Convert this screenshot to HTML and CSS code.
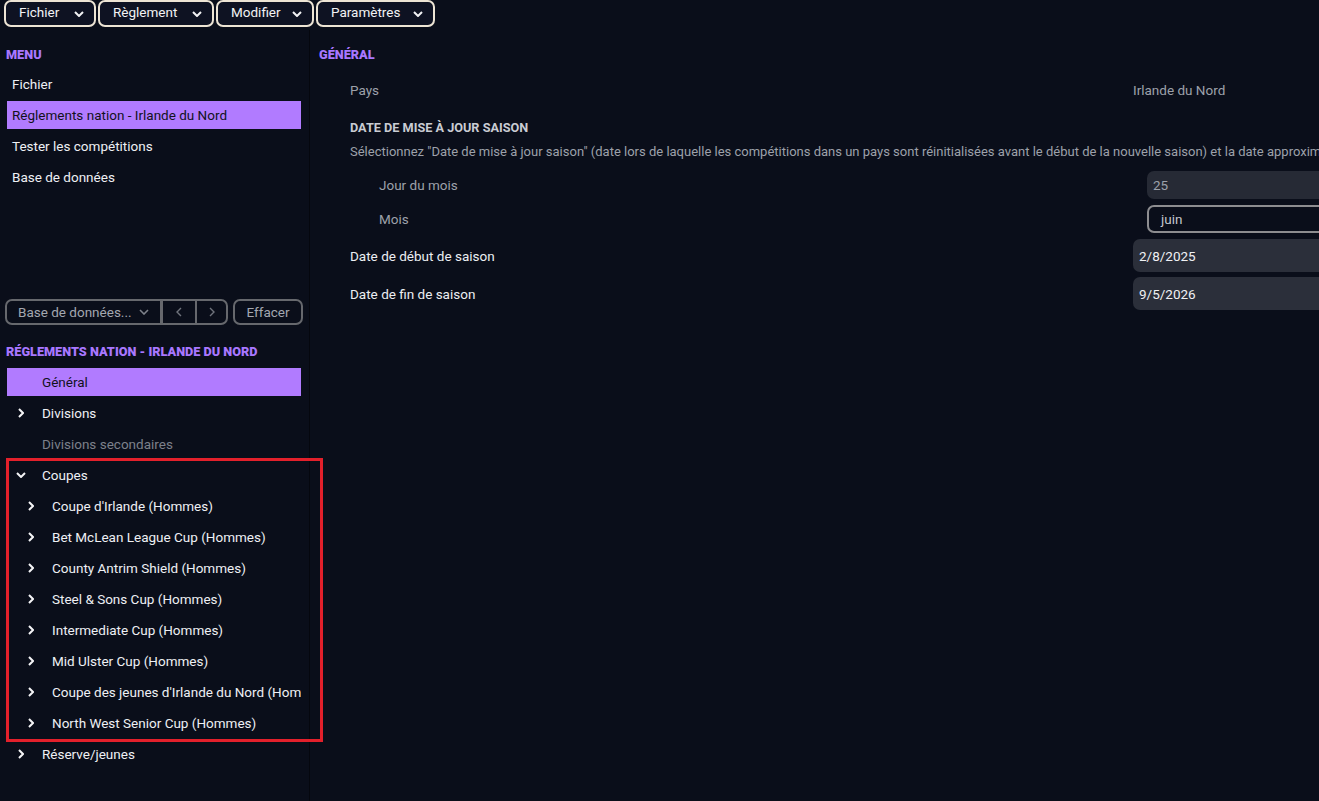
FILE: index.html
```html
<!DOCTYPE html>
<html lang="fr">
<head>
<meta charset="utf-8">
<title>Réglements nation</title>
<link rel="stylesheet" href="styles.css">
</head>
<body>
<div class="app">
  <header class="topbar">
    <button class="top-btn">Fichier <svg class="chev-d" viewBox="0 0 10 6"><path d="M1 1l4 4 4-4"/></svg></button>
    <button class="top-btn">Règlement <svg class="chev-d" viewBox="0 0 10 6"><path d="M1 1l4 4 4-4"/></svg></button>
    <button class="top-btn">Modifier <svg class="chev-d" viewBox="0 0 10 6"><path d="M1 1l4 4 4-4"/></svg></button>
    <button class="top-btn">Paramètres <svg class="chev-d" viewBox="0 0 10 6"><path d="M1 1l4 4 4-4"/></svg></button>
  </header>
  <div class="layout">
    <aside class="sidebar">
      <div class="sec-title">MENU</div>
      <ul class="menu">
        <li class="menu-item">Fichier</li>
        <li class="menu-item active">Réglements nation - Irlande du Nord</li>
        <li class="menu-item">Tester les compétitions</li>
        <li class="menu-item">Base de données</li>
      </ul>
      <div class="toolbar">
        <div class="seg">
          <div class="seg-drop">Base de données... <svg class="chev-d grey" viewBox="0 0 10 6"><path d="M1 1l4 4 4-4"/></svg></div>
          <div class="seg-btn seg-prev"><svg class="chev-s" viewBox="0 0 6 10"><path d="M5 1L1 5l4 4"/></svg></div>
          <div class="seg-btn seg-next"><svg class="chev-s" viewBox="0 0 6 10"><path d="M1 1l4 4-4 4"/></svg></div>
        </div>
        <div class="clear-btn">Effacer</div>
      </div>
      <div class="sec-title sec-second">RÉGLEMENTS NATION - IRLANDE DU NORD</div>
      <ul class="tree">
        <li class="node lvl1 active"><span class="arr"></span>Général</li>
        <li class="node lvl1"><span class="arr"><svg viewBox="0 0 6 10"><path d="M1 1l4 4-4 4"/></svg></span>Divisions</li>
        <li class="node lvl1 muted"><span class="arr"></span>Divisions secondaires</li>
        <li class="node lvl1"><span class="arr"><svg class="down" viewBox="0 0 10 6"><path d="M1 1l4 4 4-4"/></svg></span>Coupes</li>
        <li class="node lvl2"><span class="arr"><svg viewBox="0 0 6 10"><path d="M1 1l4 4-4 4"/></svg></span>Coupe d'Irlande (Hommes)</li>
        <li class="node lvl2"><span class="arr"><svg viewBox="0 0 6 10"><path d="M1 1l4 4-4 4"/></svg></span>Bet McLean League Cup (Hommes)</li>
        <li class="node lvl2"><span class="arr"><svg viewBox="0 0 6 10"><path d="M1 1l4 4-4 4"/></svg></span>County Antrim Shield (Hommes)</li>
        <li class="node lvl2"><span class="arr"><svg viewBox="0 0 6 10"><path d="M1 1l4 4-4 4"/></svg></span>Steel &amp; Sons Cup (Hommes)</li>
        <li class="node lvl2"><span class="arr"><svg viewBox="0 0 6 10"><path d="M1 1l4 4-4 4"/></svg></span>Intermediate Cup (Hommes)</li>
        <li class="node lvl2"><span class="arr"><svg viewBox="0 0 6 10"><path d="M1 1l4 4-4 4"/></svg></span>Mid Ulster Cup (Hommes)</li>
        <li class="node lvl2"><span class="arr"><svg viewBox="0 0 6 10"><path d="M1 1l4 4-4 4"/></svg></span>Coupe des jeunes d'Irlande du Nord (Hommes)</li>
        <li class="node lvl2"><span class="arr"><svg viewBox="0 0 6 10"><path d="M1 1l4 4-4 4"/></svg></span>North West Senior Cup (Hommes)</li>
        <li class="node lvl1"><span class="arr"><svg viewBox="0 0 6 10"><path d="M1 1l4 4-4 4"/></svg></span>Réserve/jeunes</li>
      </ul>
      <div class="annot"></div>
    </aside>
    <main class="main">
      <div class="sec-title">GÉNÉRAL</div>
      <div class="form">
        <div class="row row-pays">
          <div class="lbl grey">Pays</div>
          <div class="val grey">Irlande du Nord</div>
        </div>
        <div class="sub-head">DATE DE MISE À JOUR SAISON</div>
        <div class="desc">Sélectionnez "Date de mise à jour saison" (date lors de laquelle les compétitions dans un pays sont réinitialisées avant le début de la nouvelle saison) et la date approximative de fin de saison.</div>
        <div class="row indent row-day">
          <div class="lbl grey">Jour du mois</div>
          <div class="field field-day">25</div>
        </div>
        <div class="row indent row-month">
          <div class="lbl grey">Mois</div>
          <div class="field field-month">juin</div>
        </div>
        <div class="row row-start">
          <div class="lbl">Date de début de saison</div>
          <div class="field field-date">2/8/2025</div>
        </div>
        <div class="row row-end">
          <div class="lbl">Date de fin de saison</div>
          <div class="field field-date">9/5/2026</div>
        </div>
      </div>
    </main>
  </div>
</div>
</body>
</html>
```
FILE: styles.css
```css
* { box-sizing: border-box; }
html, body {
  margin: 0;
  padding: 0;
  width: 1319px;
  height: 801px;
  overflow: hidden;
  background: #0a0e1a;
  font-family: Roboto, "Liberation Sans", sans-serif;
  font-size: 13.5px;
  color: #eceef2;
}
ul { list-style: none; margin: 0; padding: 0; }

.app { display: flex; flex-direction: column; height: 801px; }

.topbar {
  display: flex;
  gap: 2px;
  padding: 0 0 0 4px;
  height: 30px;
  align-items: flex-start;
}
.top-btn {
  flex: none;
  height: 27px;
  display: flex;
  align-items: center;
  justify-content: space-between;
  padding: 0 10px 3px 13px;
  background: #0e1222;
  border: 2px solid #ede4d4;
  border-radius: 7px;
  color: #f2f2f4;
  font-family: Roboto, "Liberation Sans", sans-serif;
  font-size: 13.5px;
}
.top-btn:nth-child(1) { width: 92px; }
.top-btn:nth-child(2) { width: 116px; }
.top-btn:nth-child(3) { width: 98px; }
.top-btn:nth-child(4) { width: 119px; }

.chev-d { width: 10px; height: 6px; fill: none; stroke: #f2f2f4; stroke-width: 2; }
.top-btn .chev-d { margin-top: 3px; }
.chev-d.grey { stroke: #7d818a; stroke-width: 1.6; }
.chev-s { width: 6px; height: 10px; fill: none; stroke: #6f737c; stroke-width: 1.4; }

.layout { display: flex; flex: 1; min-height: 0; }

.sidebar {
  position: relative;
  width: 310px;
  flex: none;
  border-right: 1px solid #05070e;
  padding: 14px 8px 0 7px;
}
.sec-title {
  font-size: 12.7px;
  font-weight: 900;
  color: #a877ff;
  line-height: 22px;
  margin-left: -1px;
  white-space: nowrap;
}
.menu { margin-top: 4px; display: flex; flex-direction: column; gap: 3px; height: 229px; }
.menu-item {
  height: 28px;
  line-height: 28px;
  padding-left: 5px;
  color: #eef0f4;
}
.menu-item.active, .node.active { background: #b17bff; color: #12121c; }

.toolbar {
  display: flex;
  gap: 5px;
  margin-left: -2px;
  height: 26px;
}
.seg {
  flex: none;
  display: flex;
  border: 2px solid #66686d;
  border-radius: 7px;
  overflow: hidden;
  color: #a3a7b0;
}
.seg-drop {
  flex: none;
  width: 153px;
  display: flex;
  align-items: center;
  justify-content: space-between;
  padding: 0 11px 0 11px;
}
.seg-btn {
  flex: none;
  display: flex;
  align-items: center;
  justify-content: center;
}
.seg-prev { width: 35px; border-left: 3px solid #66686d; }
.seg-next { width: 31px; border-left: 2px solid #66686d; }
.clear-btn {
  flex: none;
  width: 70px;
  border: 2px solid #66686d;
  border-radius: 7px;
  display: flex;
  align-items: center;
  justify-content: center;
  color: #a3a7b0;
}
.sec-second { margin-top: 16px; }

.tree { margin-top: 5px; display: flex; flex-direction: column; gap: 3px; }
.node {
  height: 28px;
  display: flex;
  align-items: center;
  color: #eef0f4;
  white-space: nowrap;
  overflow: hidden;
}
.node.muted { color: #7c808a; }
.arr { width: 35px; flex: none; display: flex; align-items: center; padding-left: 11px; }
.lvl2 .arr { width: 45px; padding-left: 21px; }
.arr svg { width: 6px; height: 10px; fill: none; stroke: #f4f4f6; stroke-width: 2; }
.arr svg.down { width: 10px; height: 6px; margin-left: -2px; }

.annot {
  position: absolute;
  left: 6px;
  top: 428px;
  width: 317px;
  height: 284px;
  border: 3px solid #e3202b;
  pointer-events: none;
}

.main { flex: 1; padding: 14px 0 0 10px; min-width: 0; }
.form { padding-left: 30px; }
.row { display: flex; align-items: center; }
.lbl { width: 783px; flex: none; white-space: nowrap; }
.grey { color: #9da1aa; }
.row-pays { height: 28px; margin-top: 10px; }
.sub-head {
  margin-top: 15px;
  font-size: 12.7px;
  font-weight: 700;
  color: #c9ccd3;
  line-height: 18px;
  white-space: nowrap;
}
.desc { color: #9da1aa; white-space: nowrap; line-height: 20px; margin-top: 5px; font-size: 13px; }
.indent .lbl { padding-left: 29px; width: 797px; }
.field {
  width: 400px;
  flex: none;
  border-radius: 7px;
  display: flex;
  align-items: center;
  padding-left: 6px;
}
.row-day { margin-top: 9px; }
.row-month { margin-top: 6px; }
.row-start { margin-top: 6px; }
.row-end { margin-top: 5px; }
.field-day { height: 28px; background: #262a35; color: #9da1aa; }
.field-month { height: 28px; border: 2px solid #8d8d90; color: #c4c7ce; padding-left: 12px; }
.field-date { height: 33px; background: #2b2f3a; color: #f0f1f4; }
```
